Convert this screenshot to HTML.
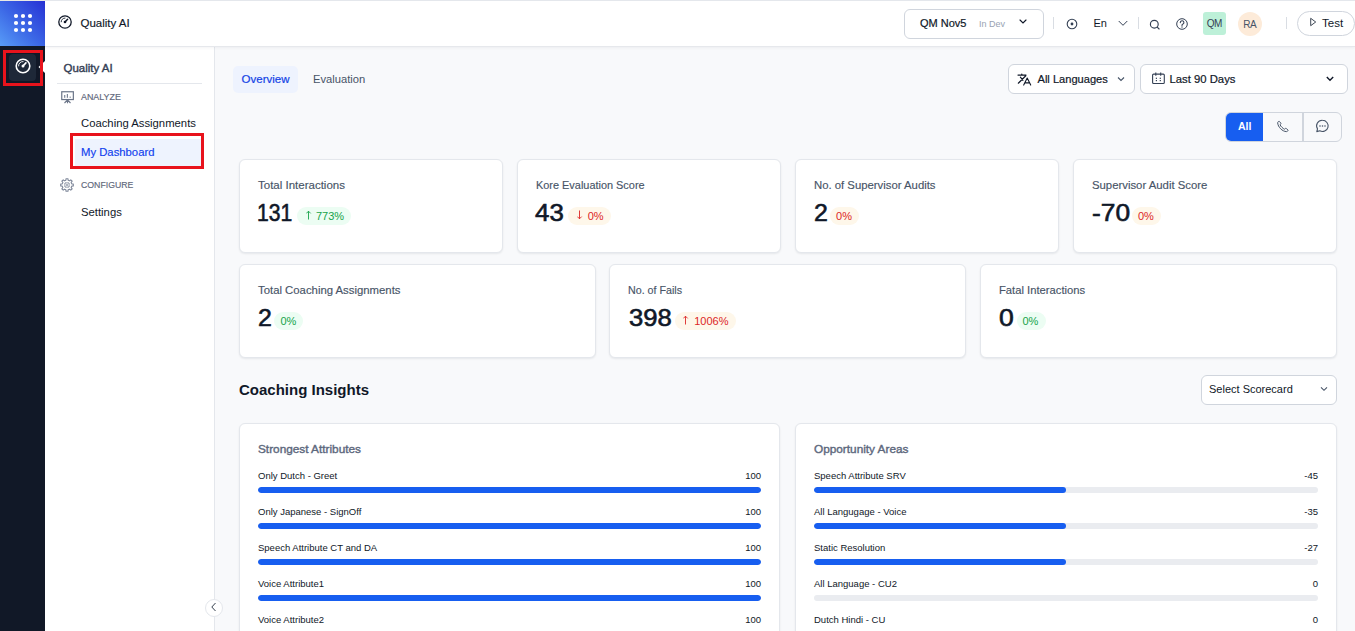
<!DOCTYPE html>
<html><head><meta charset="utf-8">
<style>
*{box-sizing:border-box;margin:0;padding:0}
html,body{width:1355px;height:631px;overflow:hidden;background:#f8f9fb;font-family:"Liberation Sans",sans-serif;color:#101828}
.a{position:absolute;white-space:nowrap}
#rail{left:0;top:0;width:45px;height:631px;background:#111827}
#grad{left:0;top:0;width:45px;height:46px;background:linear-gradient(225deg,#2630d4 0%,#3c68e6 55%,#589cf7 100%)}
#hdr{left:45px;top:0;width:1310px;height:46px;background:#fff;border-top:1px solid #e4e7ec;box-shadow:0 1px 0 #e6e8ec,0 2px 3px rgba(16,24,40,.05)}
#side{left:45px;top:46px;width:170px;height:585px;background:#fff;border-right:1px solid #e4e7ec}
.card{position:absolute;background:#fff;border:1px solid #e4e7ec;border-radius:6px;box-shadow:0 1px 2px rgba(16,24,40,.08)}
.ctl{font-size:11.5px;line-height:13px;color:#475467;-webkit-text-stroke:0.15px #475467}
.cnm{font-size:23.5px;line-height:24px;color:#101828;-webkit-text-stroke:0.6px #101828}
.bdg{height:18px;border-radius:9px}
.up{background:#ecfdf3}
.dn{background:#fef7ea}
.bt{font-size:11px;line-height:12px}
.upt{color:#16a34a}
.dnt{color:#dc2626}
.lbl{position:absolute;font-size:9.5px;color:#101828;white-space:nowrap}
.val{position:absolute;font-size:9.5px;color:#101828;white-space:nowrap;text-align:right}
.bar{position:absolute;height:6px;border-radius:3px;background:#eaecf0;overflow:hidden}
.bar i{position:absolute;left:0;top:0;height:6px;border-radius:3px;background:#175ef0}
</style></head><body>
<div id="rail" class="a"></div>
<div id="grad" class="a"></div>
<div class="a" style="left:0;top:0;width:45px;height:1px;background:#e9e9e4"></div>
<!-- grid dots -->
<svg class="a" style="left:0;top:0" width="45" height="46">
<g fill="#fff">
<circle cx="16" cy="16" r="2.1"/><circle cx="23" cy="16" r="2.1"/><circle cx="30" cy="16" r="2.1"/>
<circle cx="16" cy="23" r="2.1"/><circle cx="23" cy="23" r="2.1"/><circle cx="30" cy="23" r="2.1"/>
<circle cx="16" cy="30" r="2.1"/><circle cx="23" cy="30" r="2.1"/><circle cx="30" cy="30" r="2.1"/>
</g></svg>
<div class="a" style="left:9px;top:54px;width:27px;height:27px;border-radius:4px;background:#1e2838"></div>
<svg class="a" style="left:12.5px;top:56.3px" width="20" height="20" viewBox="0 0 20 20">
<circle cx="10" cy="10" r="6.8" fill="none" stroke="#fff" stroke-width="1.6"/>
<path d="M5.6 10.3 A4.4 4.4 0 0 1 10.5 5.6" fill="none" stroke="#fff" stroke-width="0.9"/>
<path d="M10 10 L12.9 6.9" stroke="#fff" stroke-width="1.7" stroke-linecap="round"/>
<circle cx="10" cy="10" r="1.5" fill="#fff"/>
</svg>

<div id="side" class="a"></div>
<div id="hdr" class="a"></div>
<!-- tooltip notch -->
<svg class="a" style="left:38px;top:61px" width="7" height="12"><path d="M7 0 L0.5 6 L7 12 Z" fill="#fff"/></svg>
<div class="a" style="left:3px;top:50px;width:40px;height:36px;border:3px solid #e8131c"></div>

<!-- header content -->
<svg class="a" style="left:57.2px;top:14.2px" width="16" height="16" viewBox="0 0 16 16">
<circle cx="8" cy="8" r="6.2" fill="none" stroke="#101828" stroke-width="1.3"/>
<path d="M4.2 8.2 A3.9 3.9 0 0 1 8.4 4.1" fill="none" stroke="#101828" stroke-width="0.9"/>
<path d="M8 8 L10.6 5.3" stroke="#101828" stroke-width="1.5" stroke-linecap="round"/>
<circle cx="8" cy="8" r="1.3" fill="#101828"/>
</svg>
<div class="a" style="left:80.5px;top:16px;font-size:11.5px;line-height:14px;color:#101828;-webkit-text-stroke:0.15px #101828">Quality AI</div>

<div class="a" style="left:904px;top:9px;width:140px;height:30px;border:1px solid #d0d5dd;border-radius:6px;background:#fff"></div>
<div class="a" style="left:920px;top:17px;font-size:11px;line-height:13px;color:#101828;-webkit-text-stroke:0.2px #101828">QM Nov5</div>
<div class="a" style="left:979px;top:19px;font-size:9px;line-height:11px;color:#98a2b3">In Dev</div>
<svg class="a" style="left:1018px;top:18px" width="10" height="8"><path d="M2 2 L5 5 L8 2" fill="none" stroke="#101828" stroke-width="1.15" stroke-linecap="round"/></svg>
<div class="a" style="left:1053px;top:17px;width:1px;height:12px;background:#d9dde3"></div>
<svg class="a" style="left:1065px;top:17px" width="14" height="14" viewBox="0 0 14 14"><circle cx="7" cy="7" r="4.8" fill="none" stroke="#344054" stroke-width="1.1"/><circle cx="7" cy="7" r="1.4" fill="#344054"/></svg>
<div class="a" style="left:1093.5px;top:17px;font-size:11px;line-height:13px;color:#101828">En</div>
<svg class="a" style="left:1117px;top:19px" width="12" height="9"><path d="M2 2.3 L6 6.3 L10 2.3" fill="none" stroke="#344054" stroke-width="1" stroke-linecap="round"/></svg>
<div class="a" style="left:1138px;top:17px;width:1px;height:12px;background:#d9dde3"></div>
<svg class="a" style="left:1148px;top:18px" width="13" height="13" viewBox="0 0 13 13"><circle cx="6.3" cy="6.2" r="3.9" fill="none" stroke="#344054" stroke-width="1.15"/><path d="M9.2 9.1 L11.1 11" stroke="#344054" stroke-width="1.15" stroke-linecap="round"/></svg>
<svg class="a" style="left:1175px;top:17px" width="14" height="14" viewBox="0 0 14 14"><circle cx="7" cy="7" r="5.3" fill="none" stroke="#344054" stroke-width="1"/><path d="M5.3 5.6 A1.8 1.8 0 1 1 7.6 7.3 C7.1 7.5 7 7.8 7 8.4" fill="none" stroke="#344054" stroke-width="1.1" stroke-linecap="round"/><circle cx="7" cy="10" r=".7" fill="#344054"/></svg>
<div class="a" style="left:1203px;top:12px;width:23px;height:23px;border-radius:3px;background:#bdf0d8;font-size:10px;line-height:24px;letter-spacing:-0.4px;text-indent:-0.4px;text-align:center;color:#344054">QM</div>
<div class="a" style="left:1238px;top:12px;width:24px;height:24px;border-radius:12px;background:#fdebd9;font-size:10px;line-height:25px;letter-spacing:-0.6px;text-indent:-0.6px;text-align:center;color:#475467">RA</div>
<div class="a" style="left:1286px;top:17px;width:1px;height:12px;background:#d9dde3"></div>
<div class="a" style="left:1297px;top:11px;width:58px;height:25px;border:1px solid #d0d5dd;border-radius:13px;background:#fff"></div>
<svg class="a" style="left:1309px;top:17px" width="9" height="10"><path d="M1.7 1.3 L6.7 5 L1.7 8.7 Z" fill="none" stroke="#1d2939" stroke-width="0.85" stroke-linejoin="round"/></svg>
<div class="a" style="left:1322px;top:17px;font-size:11.5px;line-height:13px;color:#101828">Test</div>

<!-- sidebar content -->
<div class="a" style="left:63.5px;top:62px;font-size:11.5px;line-height:13px;-webkit-text-stroke:0.4px #344054;color:#344054">Quality AI</div>
<div class="a" style="left:57px;top:83px;width:145px;height:1px;background:#e4e7ec"></div>
<svg class="a" style="left:60px;top:90px" width="16" height="15" viewBox="0 0 16 15"><rect x="1.75" y="1.75" width="11.6" height="7.8" fill="none" stroke="#6b7588" stroke-width="1.2"/><g fill="#7c8596"><rect x="4.1" y="5" width="1.2" height="2.8"/><rect x="6.8" y="4" width="1.2" height="3.8"/><rect x="9.6" y="6.6" width="1.2" height="1.2"/></g><path d="M7.5 9.6 V13.3 M7.5 10 L4.5 13 M7.5 10 L10.5 13" fill="none" stroke="#6b7588" stroke-width="1.1"/></svg>
<div class="a" style="left:81.3px;top:91.3px;font-size:9.4px;line-height:11px;transform:scaleX(0.95);transform-origin:0 0;color:#5d6679;-webkit-text-stroke:0.15px #5d6679">ANALYZE</div>
<div class="a" style="left:81px;top:117px;font-size:11.3px;line-height:13px;color:#101828">Coaching Assignments</div>
<div class="a" style="left:74.5px;top:138.5px;width:127px;height:27.3px;background:#eef3fe"></div>
<div class="a" style="left:81px;top:146px;font-size:11.3px;line-height:13px;color:#1040ee;-webkit-text-stroke:0.15px #1040ee">My Dashboard</div>
<div class="a" style="left:70px;top:133px;width:134px;height:36px;border:3px solid #e8131c"></div>
<svg class="a" style="left:59.3px;top:177.4px" width="16" height="16" viewBox="0 0 16 16"><path d="M7.00 1.68 L9.00 1.68 L9.14 3.24 L10.56 3.82 L11.76 2.82 L13.18 4.24 L12.18 5.44 L12.76 6.86 L14.32 7.00 L14.32 9.00 L12.76 9.14 L12.18 10.56 L13.18 11.76 L11.76 13.18 L10.56 12.18 L9.14 12.76 L9.00 14.32 L7.00 14.32 L6.86 12.76 L5.44 12.18 L4.24 13.18 L2.82 11.76 L3.82 10.56 L3.24 9.14 L1.68 9.00 L1.68 7.00 L3.24 6.86 L3.82 5.44 L2.82 4.24 L4.24 2.82 L5.44 3.82 L6.86 3.24 Z" fill="none" stroke="#7f889a" stroke-width="1.1" stroke-linejoin="round"/><circle cx="8" cy="8" r="2.6" fill="none" stroke="#7f889a" stroke-width="1"/><path d="M8 4.8 V11.2 M4.8 8 H11.2" stroke="#fff" stroke-width="0.9"/><path d="M8 6.3 V9.7 M6.3 8 H9.7" stroke="#7f889a" stroke-width="0.8"/></svg>
<div class="a" style="left:81.3px;top:179px;font-size:9.6px;line-height:11px;transform:scaleX(0.91);transform-origin:0 0;color:#5d6679;-webkit-text-stroke:0.15px #5d6679">CONFIGURE</div>
<div class="a" style="left:81px;top:206px;font-size:11.3px;line-height:13px;color:#101828">Settings</div>
<!-- collapse button -->
<div class="a" style="left:205px;top:599px;width:18px;height:18px;border-radius:9px;background:#fff;border:1px solid #e4e7ec"></div>
<svg class="a" style="left:209px;top:602px" width="10" height="11"><path d="M6.5 1 L2.8 5 L6.5 9" fill="none" stroke="#1d2939" stroke-width="0.9"/></svg>

<!-- main: tabs -->
<div class="a" style="left:233px;top:66px;width:65px;height:27px;border-radius:5px;background:#eef3fe"></div>
<div class="a" style="left:241.6px;top:73px;font-size:11.5px;line-height:13px;color:#1544e6;-webkit-text-stroke:0.2px #1544e6">Overview</div>
<div class="a" style="left:313px;top:73px;font-size:11.2px;line-height:13px;color:#475467">Evaluation</div>

<!-- filters -->
<div class="a" style="left:1008px;top:64px;width:127px;height:30px;border:1px solid #d0d5dd;border-radius:6px;background:#fff"></div>
<svg class="a" style="left:1017px;top:72px" width="16" height="15" viewBox="0 0 16 15"><path d="M1 3.1 H9 M4.8 2 V3.1 M8.8 3.8 L1.3 11.2 M3.4 5.2 L5.9 8.3" fill="none" stroke="#101828" stroke-width="1.2" stroke-linecap="round"/><path d="M6.7 13.1 L10.2 6.1 L13.7 13.1 M8 10.9 H12.4" fill="none" stroke="#101828" stroke-width="1.1" stroke-linecap="round" stroke-linejoin="round"/></svg>
<div class="a" style="left:1037.5px;top:73px;font-size:11.1px;line-height:13px;color:#101828;-webkit-text-stroke:0.2px #101828">All Languages</div>
<svg class="a" style="left:1116px;top:75px" width="10" height="8"><path d="M2 2.5 L5 5.5 L8 2.5" fill="none" stroke="#475467" stroke-width="1.1"/></svg>

<div class="a" style="left:1140px;top:64px;width:208px;height:30px;border:1px solid #d0d5dd;border-radius:6px;background:#fff"></div>
<svg class="a" style="left:1151px;top:71px" width="15" height="14" viewBox="0 0 15 14"><rect x="1.6" y="3.1" width="11.7" height="9.4" rx="1" fill="none" stroke="#344054" stroke-width="1.1"/><path d="M4.8 1.6 V4.8 M9.7 1.6 V4.8" stroke="#344054" stroke-width="1.1"/><g fill="#344054"><rect x="4.8" y="6.7" width="1.2" height="1.2"/><rect x="8.7" y="6.7" width="1.2" height="1.2"/><rect x="4.8" y="9" width="1.2" height="1.2"/><rect x="8.7" y="9" width="1.2" height="1.2"/></g></svg>
<div class="a" style="left:1169.5px;top:73px;font-size:11.3px;line-height:13px;color:#101828;-webkit-text-stroke:0.2px #101828">Last 90 Days</div>
<svg class="a" style="left:1325px;top:75px" width="10" height="8"><path d="M1.8 2 L5 5.2 L8.2 2" fill="none" stroke="#101828" stroke-width="1.4"/></svg>

<!-- segmented -->
<div class="a" style="left:1225px;top:112px;width:117px;height:30px;border:1px solid #d0d5dd;border-radius:6px;overflow:hidden">
  <div class="a" style="left:-1px;top:-1px;width:38px;height:30px;background:#175ef0"></div>
  <div class="a" style="left:76px;top:-1px;width:2px;height:30px;background:#d0d5dd"></div>
</div>
<div class="a" style="left:1238px;top:120px;font-size:10.5px;line-height:12px;color:#fff;font-weight:bold">All</div>
<svg class="a" style="left:1276px;top:120px" width="14" height="13" viewBox="0 0 14 13"><path d="M3.2 1.3 C2.5 1.3 1.6 2 1.7 3 C2 7 6.2 11.5 10.5 11.6 C11.4 11.6 12 10.8 12 10.2 L10.4 8.5 C10 8.2 9.5 8.3 9.2 8.6 L8.5 9.2 C7 8.6 4.6 6.3 4.1 4.8 L4.7 4.1 C5 3.7 5 3.2 4.7 2.9 Z" fill="none" stroke="#475467" stroke-width="1"/></svg>
<svg class="a" style="left:1315px;top:119px" width="15" height="14" viewBox="0 0 15 14"><path d="M7.5 1.3 A5.6 5.6 0 1 1 4.8 11.8 L1.8 12.6 L2.5 9.9 A5.6 5.6 0 0 1 7.5 1.3 Z" fill="none" stroke="#475467" stroke-width="1.1" stroke-linejoin="round"/><g fill="#475467"><circle cx="5" cy="7" r=".8"/><circle cx="7.5" cy="7" r=".8"/><circle cx="10" cy="7" r=".8"/></g></svg>

<!-- KPI row 1 -->
<div class="card" style="left:239px;top:159px;width:264px;height:94px"></div>
<div class="a ctl" style="left:258px;top:179px">Total Interactions</div>
<div class="a cnm" style="left:257.3px;top:201px;transform:scaleX(0.9);transform-origin:0 0">131</div>
<div class="a bdg up" style="left:297px;top:207px;width:54px"></div>
<svg class="a" style="left:305.5px;top:210px" width="6" height="10"><path d="M2.5 9.5 V1.2 M0.3 3.4 L2.5 1.2 L4.7 3.4" fill="none" stroke="#16a34a" stroke-width="0.9"/></svg>
<div class="a bt upt" style="left:316.0px;top:210px">773%</div>
<div class="card" style="left:517px;top:159px;width:264px;height:94px"></div>
<div class="a ctl" style="left:536px;top:179px;transform:scaleX(0.949);transform-origin:0 0">Kore Evaluation Score</div>
<div class="a cnm" style="left:535.3px;top:201px;transform:scaleX(1.1);transform-origin:0 0">43</div>
<div class="a bdg dn" style="left:568px;top:207px;width:43px"></div>
<svg class="a" style="left:576.5px;top:210px" width="6" height="10"><path d="M2.5 0.5 V8.8 M0.3 6.6 L2.5 8.8 L4.7 6.6" fill="none" stroke="#dc2626" stroke-width="0.9"/></svg>
<div class="a bt dnt" style="left:587.7px;top:210px">0%</div>
<div class="card" style="left:795px;top:159px;width:264px;height:94px"></div>
<div class="a ctl" style="left:814px;top:179px;transform:scaleX(0.985);transform-origin:0 0">No. of Supervisor Audits</div>
<div class="a cnm" style="left:813.6px;top:201px;transform:scaleX(1.06);transform-origin:0 0">2</div>
<div class="a bdg dn" style="left:830px;top:207px;width:29px"></div>
<div class="a bt dnt" style="left:836.1px;top:210px">0%</div>
<div class="card" style="left:1073px;top:159px;width:264px;height:94px"></div>
<div class="a ctl" style="left:1092px;top:179px;transform:scaleX(0.986);transform-origin:0 0">Supervisor Audit Score</div>
<div class="a cnm" style="left:1091.7px;top:201px;transform:scaleX(1.12);transform-origin:0 0">-70</div>
<div class="a bdg dn" style="left:1132px;top:207px;width:29px"></div>
<div class="a bt dnt" style="left:1137.9px;top:210px">0%</div>
<div class="card" style="left:239px;top:264px;width:357px;height:94px"></div>
<div class="a ctl" style="left:258px;top:284px;transform:scaleX(0.986);transform-origin:0 0">Total Coaching Assignments</div>
<div class="a cnm" style="left:257.6px;top:306px;transform:scaleX(1.06);transform-origin:0 0">2</div>
<div class="a bdg up" style="left:274px;top:312px;width:29px"></div>
<div class="a bt upt" style="left:280.4px;top:315px">0%</div>
<div class="card" style="left:609px;top:264px;width:357px;height:94px"></div>
<div class="a ctl" style="left:628px;top:284px;transform:scaleX(0.93);transform-origin:0 0">No. of Fails</div>
<div class="a cnm" style="left:628.7px;top:306px;transform:scaleX(1.09);transform-origin:0 0">398</div>
<div class="a bdg dn" style="left:675px;top:312px;width:61px"></div>
<svg class="a" style="left:683.4px;top:315px" width="6" height="10"><path d="M2.5 9.5 V1.2 M0.3 3.4 L2.5 1.2 L4.7 3.4" fill="none" stroke="#dc2626" stroke-width="0.9"/></svg>
<div class="a bt dnt" style="left:694.2px;top:315px">1006%</div>
<div class="card" style="left:980px;top:264px;width:357px;height:94px"></div>
<div class="a ctl" style="left:999px;top:284px;transform:scaleX(0.977);transform-origin:0 0">Fatal Interactions</div>
<div class="a cnm" style="left:998.7px;top:306px;transform:scaleX(1.13);transform-origin:0 0">0</div>
<div class="a bdg up" style="left:1017px;top:312px;width:29px"></div>
<div class="a bt upt" style="left:1022.4px;top:315px">0%</div>

<!-- coaching insights -->
<div class="a" style="left:239px;top:381px;font-size:15px;line-height:17px;font-weight:bold;color:#101828">Coaching Insights</div>
<div class="a" style="left:1201px;top:375px;width:136px;height:30px;border:1px solid #d0d5dd;border-radius:6px;background:#fff"></div>
<div class="a" style="left:1209px;top:383px;font-size:11px;line-height:13px;color:#101828">Select Scorecard</div>
<svg class="a" style="left:1319px;top:385px" width="10" height="8"><path d="M2 2.3 L5 5.3 L8 2.3" fill="none" stroke="#475467" stroke-width="1.1"/></svg>

<div class="card" style="left:239px;top:423px;width:541px;height:230px" id="c1">
  <div class="a" style="left:18px;top:19px;font-size:11.8px;line-height:13px;-webkit-text-stroke:0.4px #5d687d;color:#5d687d">Strongest Attributes</div>
  <div class="lbl" style="left:18px;top:46px;line-height:12px">Only Dutch - Greet</div>
  <div class="val" style="right:18px;top:46px;line-height:12px">100</div>
  <div class="bar" style="left:18px;top:63px;width:503px"><i style="width:100%"></i></div>
  <div class="lbl" style="left:18px;top:82px;line-height:12px">Only Japanese - SignOff</div>
  <div class="val" style="right:18px;top:82px;line-height:12px">100</div>
  <div class="bar" style="left:18px;top:99px;width:503px"><i style="width:100%"></i></div>
  <div class="lbl" style="left:18px;top:118px;line-height:12px">Speech Attribute CT and DA</div>
  <div class="val" style="right:18px;top:118px;line-height:12px">100</div>
  <div class="bar" style="left:18px;top:135px;width:503px"><i style="width:100%"></i></div>
  <div class="lbl" style="left:18px;top:154px;line-height:12px">Voice Attribute1</div>
  <div class="val" style="right:18px;top:154px;line-height:12px">100</div>
  <div class="bar" style="left:18px;top:171px;width:503px"><i style="width:100%"></i></div>
  <div class="lbl" style="left:18px;top:190px;line-height:12px">Voice Attribute2</div>
  <div class="val" style="right:18px;top:190px;line-height:12px">100</div>
  <div class="bar" style="left:18px;top:207px;width:503px"><i style="width:100%"></i></div>
  <div class="lbl" style="left:18px;top:226px;line-height:12px">Voice Attribute3</div>
  <div class="val" style="right:18px;top:226px;line-height:12px">100</div>
  <div class="bar" style="left:18px;top:243px;width:503px"><i style="width:100%"></i></div>
</div>
<div class="card" style="left:795px;top:423px;width:542px;height:230px" id="c2">
  <div class="a" style="left:18px;top:19px;font-size:11.8px;line-height:13px;-webkit-text-stroke:0.4px #5d687d;color:#5d687d">Opportunity Areas</div>
  <div class="lbl" style="left:18px;top:46px;line-height:12px">Speech Attribute SRV</div>
  <div class="val" style="right:18px;top:46px;line-height:12px">-45</div>
  <div class="bar" style="left:18px;top:63px;width:504px"><i style="width:50%"></i></div>
  <div class="lbl" style="left:18px;top:82px;line-height:12px">All Langugage - Voice</div>
  <div class="val" style="right:18px;top:82px;line-height:12px">-35</div>
  <div class="bar" style="left:18px;top:99px;width:504px"><i style="width:50%"></i></div>
  <div class="lbl" style="left:18px;top:118px;line-height:12px">Static Resolution</div>
  <div class="val" style="right:18px;top:118px;line-height:12px">-27</div>
  <div class="bar" style="left:18px;top:135px;width:504px"><i style="width:50%"></i></div>
  <div class="lbl" style="left:18px;top:154px;line-height:12px">All Language - CU2</div>
  <div class="val" style="right:18px;top:154px;line-height:12px">0</div>
  <div class="bar" style="left:18px;top:171px;width:504px"></div>
  <div class="lbl" style="left:18px;top:190px;line-height:12px">Dutch Hindi - CU</div>
  <div class="val" style="right:18px;top:190px;line-height:12px">0</div>
  <div class="bar" style="left:18px;top:207px;width:504px"></div>
  <div class="lbl" style="left:18px;top:226px;line-height:12px">Dutch Hindi - CU2</div>
  <div class="val" style="right:18px;top:226px;line-height:12px">0</div>
  <div class="bar" style="left:18px;top:243px;width:504px"></div>
</div>
</body></html>
